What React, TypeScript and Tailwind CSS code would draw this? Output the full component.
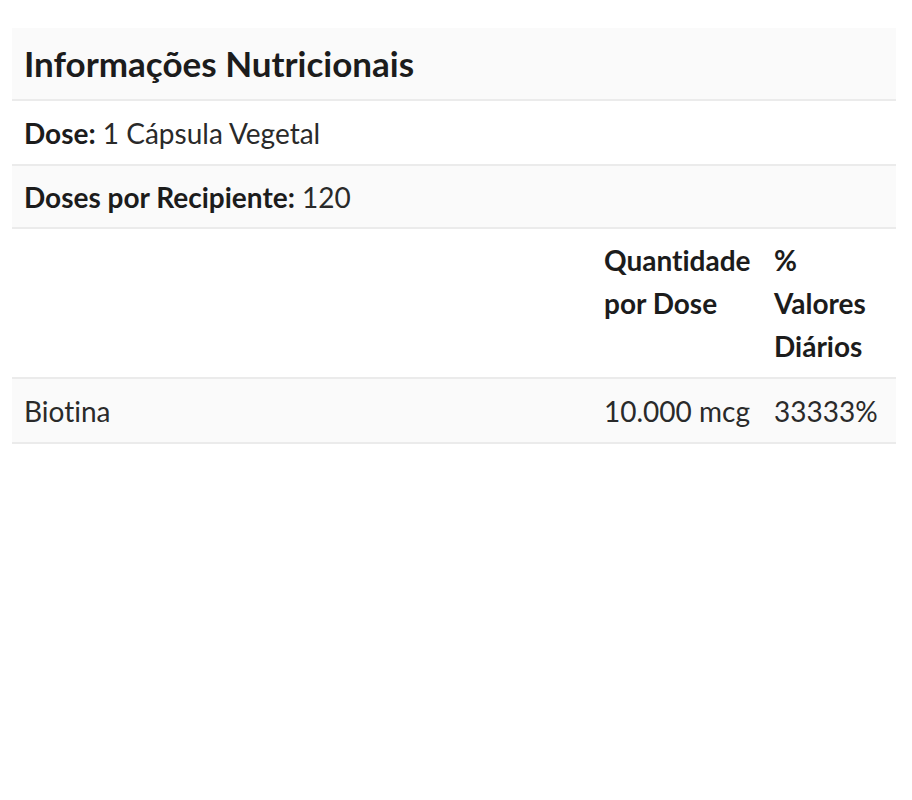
import React from "react";

export default function App() {
  const font = { fontFamily: "Lato, 'Noto Sans', sans-serif" };
  return (
    <div
      className="min-h-[800px] bg-white pt-[28px] px-[12px] text-[#1c1c1c] [font-variant-ligatures:none]"
      style={font}
    >
      <div className="w-[884px]">
        <div className="bg-[#fafafa] border-b-2 border-[#ebebeb] h-[73px] flex items-center px-[12px]">
          <h2 className="text-[35px] font-bold leading-none">Informações Nutricionais</h2>
        </div>
        <div className="bg-white border-b-2 border-[#ebebeb] h-[65px] flex items-center px-[12px] text-[28px]">
          <span className="font-bold">Dose:</span>&nbsp;<span className="text-[#2a2a2a]">1 Cápsula Vegetal</span>
        </div>
        <div className="bg-[#fafafa] border-b-2 border-[#ebebeb] h-[63px] flex items-center px-[12px] text-[28px]">
          <span className="font-bold">Doses por Recipiente:</span>&nbsp;<span className="text-[#2a2a2a]">120</span>
        </div>
        <div className="bg-white border-b-2 border-[#ebebeb] flex text-[28px] leading-[43px] font-bold pt-[10px] pb-[9px]">
          <div className="flex-1" />
          <div className="w-[170px] px-[12px]">Quantidade por Dose</div>
          <div className="w-[134px] px-[12px]">% Valores Diários</div>
        </div>
        <div className="bg-[#fafafa] border-b-2 border-[#ebebeb] h-[65px] flex items-center text-[28px] text-[#2a2a2a]">
          <div className="flex-1 px-[12px]">Biotina</div>
          <div className="w-[170px] px-[12px] whitespace-nowrap">10.000 mcg</div>
          <div className="w-[134px] px-[12px]">33333%</div>
        </div>
      </div>
    </div>
  );
}
